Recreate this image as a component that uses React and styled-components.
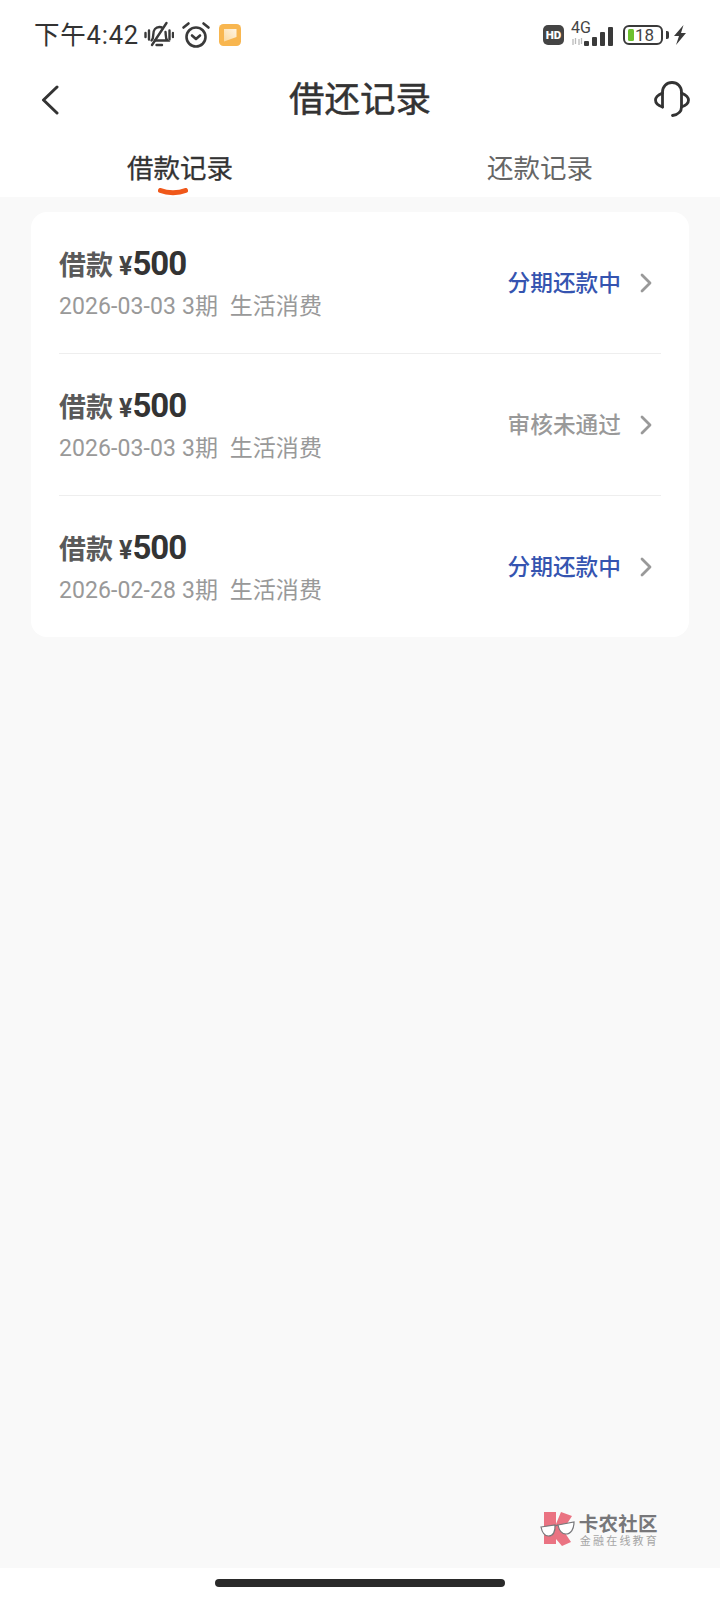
import styled, { createGlobalStyle } from 'styled-components';

const GlobalStyle = createGlobalStyle`
  html, body {
    margin: 0;
    padding: 0;
    background: #ffffff;
  }
  * {
    box-sizing: border-box;
  }
`;

const Page = styled.div`
  width: 720px;
  height: 1600px;
  display: flex;
  flex-direction: column;
  background: #ffffff;
  font-family: Roboto, "Noto Sans CJK SC", sans-serif;
  overflow: hidden;
`;

const StatusBar = styled.div`
  height: 70px;
  padding: 0 33px 0 34px;
  display: flex;
  align-items: center;
  justify-content: space-between;
`;

const StatusLeft = styled.div`
  display: flex;
  align-items: center;
`;

const StatusRight = styled.div`
  display: flex;
  align-items: center;
`;

const Time = styled.span`
  width: 103px;
  font-size: 25.5px;
  line-height: 30px;
  color: #333333;
  letter-spacing: 0.8px;
  margin-right: 7px;
  white-space: nowrap;
`;

const StatusIcon = styled.svg`
  display: block;
  margin-left: ${(p) => p.$gap || 0}px;
`;

const HdBadge = styled.span`
  width: 21px;
  height: 20px;
  border-radius: 5px;
  background: #444444;
  color: #ffffff;
  font-size: 11.5px;
  line-height: 20px;
  font-weight: 900;
  text-align: center;
`;

const Signal = styled.div`
  position: relative;
  width: 44px;
  height: 24px;
  margin-left: 7px;
`;

const NetLabel = styled.span`
  position: absolute;
  left: 0;
  top: -4px;
  font-size: 16px;
  line-height: 17px;
  color: #444444;
`;

const Battery = styled.div`
  width: 40px;
  height: 20px;
  margin-left: 8px;
  border: 2px solid #3a3a3a;
  border-radius: 6px;
  display: flex;
  align-items: center;
  padding-left: 3px;
`;

const BatteryFill = styled.div`
  width: 6px;
  height: 12px;
  border-radius: 1.5px;
  background: #6cc02e;
`;

const BatteryText = styled.span`
  font-size: 17px;
  line-height: 16px;
  color: #444444;
  margin-left: 1px;
`;

const BatteryCap = styled.div`
  width: 3px;
  height: 8px;
  margin-left: 3px;
  border-radius: 0 2px 2px 0;
  background: #3a3a3a;
`;

const Header = styled.div`
  height: 60px;
  padding: 0 30px;
  display: grid;
  grid-template-columns: 1fr auto 1fr;
  align-items: center;
`;

const HeaderStart = styled.div`
  display: flex;
  padding-left: 11px;
`;

const HeaderEnd = styled.div`
  display: flex;
  justify-content: flex-end;
  padding-bottom: 2px;
`;

const Title = styled.h1`
  margin: 0;
  font-size: 35.5px;
  line-height: 50px;
  font-weight: 400;
  color: #333333;
  -webkit-text-stroke: 0.5px #333333;
`;

const Tabs = styled.div`
  height: 67px;
  display: grid;
  grid-template-columns: 1fr 1fr;
`;

const Tab = styled.div`
  position: relative;
  text-align: center;
  font-size: 26.5px;
  line-height: 36px;
  padding-top: 21px;
  font-weight: 400;
  color: ${(p) => (p.$active ? '#333333' : '#666666')};
  -webkit-text-stroke: ${(p) => (p.$active ? '0.3px #333333' : '0')};
`;

const TabMark = styled.svg`
  position: absolute;
  left: 158px;
  top: 58px;
`;

const Main = styled.div`
  flex: 1;
  background: #f9f9f9;
  padding: 15px 31px 20px;
  display: flex;
  flex-direction: column;
`;

const Card = styled.div`
  background: #ffffff;
  border-radius: 16px;
  padding: 0 28px;
`;

const Row = styled.div`
  height: ${(p) => (p.$last ? '141px' : '142px')};
  display: flex;
  align-items: center;
  justify-content: space-between;
  border-bottom: ${(p) => (p.$last ? 'none' : '1px solid #eeeeee')};
  padding-bottom: 1px;
`;

const RowText = styled.div`
  display: flex;
  flex-direction: column;
  padding-top: 3px;
`;

const Amount = styled.div`
  display: flex;
  align-items: baseline;
  height: 42px;
  line-height: 42px;
  color: #333333;
  font-weight: 700;
`;

const AmountLabel = styled.span`
  font-size: 27px;
  color: #5a5a5a;
  margin-right: 6px;
`;

const Yen = styled.span`
  font-size: 25px;
  color: #444444;
`;

const AmountValue = styled.span`
  font-size: 33px;
  letter-spacing: -1px;
`;

const Meta = styled.div`
  margin-top: 5px;
  font-size: 23px;
  line-height: 34px;
  letter-spacing: 0.1px;
  color: #999999;
  white-space: pre;
`;

const RowEnd = styled.div`
  display: flex;
  align-items: center;
  gap: 19px;
  padding: 2px 9px 0 0;
`;

const Status = styled.span`
  font-size: 22.7px;
  line-height: 32px;
  font-weight: 500;
  padding-top: 2px;
  color: ${(p) => (p.$muted ? '#999999' : '#3554b0')};
`;

const Watermark = styled.div`
  margin-top: auto;
  align-self: flex-end;
  margin-right: 30px;
  display: flex;
  align-items: center;
  gap: 3px;
`;

const MarkText = styled.div`
  display: flex;
  flex-direction: column;
  align-items: flex-start;
`;

const MarkName = styled.span`
  font-size: 19.5px;
  line-height: 22px;
  font-weight: 700;
  color: #77777a;
  letter-spacing: 0.2px;
  padding-top: 2px;
`;

const MarkSlogan = styled.span`
  font-size: 11px;
  line-height: 13px;
  color: #a5a5a5;
  letter-spacing: 2.2px;
  margin: -1px 0 0 1px;
`;

const HomeArea = styled.div`
  height: 32px;
  display: flex;
  justify-content: center;
  padding-top: 11px;
`;

const HomeBar = styled.div`
  width: 290px;
  height: 8px;
  border-radius: 4px;
  background: #2a2a2a;
`;

const SignalSvg = styled.svg`
  position: absolute;
  left: 0;
  top: 0;
`;

const BellOff = () => (
  <StatusIcon width="30" height="30" viewBox="0 0 30 30" fill="none" stroke="#3a3a3a" strokeWidth="2.4" strokeLinecap="round">
    <path d="M7.500 20.500c1.500-1.500 1.800-3 1.800-6 0-4.500 2.500-7.500 6-7.500 1.300 0 2.500.4 3.500 1.100" />
    <path d="M21.500 12c.2.800.2 1.600.2 2.500 0 3 .3 4.500 1.800 6H11" />
    <path d="M12.500 25h5.500" />
    <path d="M22.500 3 8 25" />
    <path d="M1.500 13v4M5 10.500v9M25.500 10.500v9M29 13v4" />
  </StatusIcon>
);

const Alarm = () => (
  <StatusIcon $gap={6.5} width="30" height="30" viewBox="0 0 30 30" fill="none" stroke="#3a3a3a" strokeWidth="2.6" strokeLinecap="round" strokeLinejoin="round">
    <circle cx="15" cy="17" r="9.500" />
    <path d="M11 15.500l4 3.500 4-3.500" />
    <path d="M2.500 7.500 7.500 3.500M27.500 7.500 22.500 3.500" />
  </StatusIcon>
);

const NoteApp = () => (
  <StatusIcon $gap={7.5} width="24" height="24" viewBox="0 0 24 24">
    <defs>
      <linearGradient id="noteFill" x1="0" y1="1" x2="1" y2="0">
        <stop offset="0" stopColor="#fbd9a0" />
        <stop offset="1" stopColor="#fff4e2" />
      </linearGradient>
    </defs>
    <rect x="1" y="1" width="22" height="22" rx="4.500" fill="#f8b64f" />
    <path d="M6 6h12.500v8L6 18.500z" fill="url(#noteFill)" />
  </StatusIcon>
);

const SignalBars = () => (
  <SignalSvg width="44" height="24" viewBox="0 0 44 24">
    <path d="M2 16v6M4.500 15v6M8 16v6M10.500 15v6" stroke="#bbbbbb" strokeWidth="1.300" />
    <rect x="13" y="18" width="5" height="5" rx="1" fill="#3a3a3a" />
    <rect x="21" y="14" width="5" height="9" rx="1" fill="#3a3a3a" />
    <rect x="29" y="9" width="5" height="14" rx="1" fill="#3a3a3a" />
    <rect x="37" y="4" width="5" height="19" rx="1" fill="#3a3a3a" />
  </SignalSvg>
);

const Bolt = () => (
  <StatusIcon $gap={4} width="14" height="20" viewBox="0 0 14 20">
    <path d="M10.500 0 1 11h5l-3 9 10-12H8z" fill="#3a3a3a" />
  </StatusIcon>
);

const BackIcon = () => (
  <svg width="18" height="30" viewBox="0 0 18 30" fill="none" stroke="#333333" strokeWidth="3" strokeLinecap="round" strokeLinejoin="round">
    <path d="M16 2 2.500 15 16 28" />
  </svg>
);

const HeadsetIcon = () => (
  <svg width="36" height="36" viewBox="0 0 36 36" fill="none" stroke="#333333" strokeWidth="2.800" strokeLinecap="round" strokeLinejoin="round">
    <path d="M8.500 26V11C8.500 5.500 12.500 1.500 18 1.500S27.500 5.500 27.500 11v15c0 4.500-3.500 7.500-9 8.500" />
    <path d="M8.500 12C4 14 1.500 16.500 1.500 19S4 24.500 8.500 26" />
    <path d="M27.500 12C32 14 34.500 16.500 34.500 19S32 24.500 27.500 26" />
  </svg>
);

const Chevron = () => (
  <svg width="12" height="20" viewBox="0 0 12 20" fill="none" stroke="#999999" strokeWidth="2.800" strokeLinecap="round" strokeLinejoin="round">
    <path d="M2 2l8 8-8 8" />
  </svg>
);

const LogoMark = () => (
  <svg width="36" height="36" viewBox="0 0 36 36">
    <path d="M4 0h12v12L21 0l11 4-9 14 8 12-9 4-6-7v5H4z" fill="#ea7382" />
    <path d="M1 15 15 13C15.500 20 13 24 8.500 24 4.500 24 2 20 1 15Z" fill="#ffffff" stroke="#77777a" strokeWidth="1.200" />
    <path d="M18 13 34 10C34 17 31 22 26 22 21.500 22 19 18 18 13Z" fill="#ffffff" stroke="#77777a" strokeWidth="1.200" />
    <path d="M15 14 18 13" stroke="#77777a" strokeWidth="1.200" />
  </svg>
);

const records = [
  { date: '2026-03-03', status: '分期还款中' },
  { date: '2026-03-03', status: '审核未通过', muted: true },
  { date: '2026-02-28', status: '分期还款中' },
];

export default function App() {
  return (
    <Page>
      <GlobalStyle />
      <StatusBar>
        <StatusLeft>
          <Time>下午4:42</Time>
          <BellOff />
          <Alarm />
          <NoteApp />
        </StatusLeft>
        <StatusRight>
          <HdBadge>HD</HdBadge>
          <Signal>
            <SignalBars />
            <NetLabel>4G</NetLabel>
          </Signal>
          <Battery>
            <BatteryFill />
            <BatteryText>18</BatteryText>
          </Battery>
          <BatteryCap />
          <Bolt />
        </StatusRight>
      </StatusBar>
      <Header>
        <HeaderStart>
          <BackIcon />
        </HeaderStart>
        <Title>借还记录</Title>
        <HeaderEnd>
          <HeadsetIcon />
        </HeaderEnd>
      </Header>
      <Tabs>
        <Tab $active>
          借款记录
          <TabMark width="30" height="9" viewBox="0 0 30 9">
            <path d="M2.500 2.500c7 3 18 3 25 0" fill="none" stroke="#f0581a" strokeWidth="5" strokeLinecap="round" />
          </TabMark>
        </Tab>
        <Tab>还款记录</Tab>
      </Tabs>
      <Main>
        <Card>
          {records.map((r, i) => (
            <Row key={i} $last={i === records.length - 1}>
              <RowText>
                <Amount>
                  <AmountLabel>借款</AmountLabel>
                  <Yen>¥</Yen>
                  <AmountValue>500</AmountValue>
                </Amount>
                <Meta>{r.date} 3期  生活消费</Meta>
              </RowText>
              <RowEnd>
                <Status $muted={r.muted}>{r.status}</Status>
                <Chevron />
              </RowEnd>
            </Row>
          ))}
        </Card>
        <Watermark>
          <LogoMark />
          <MarkText>
            <MarkName>卡农社区</MarkName>
            <MarkSlogan>金融在线教育</MarkSlogan>
          </MarkText>
        </Watermark>
      </Main>
      <HomeArea>
        <HomeBar />
      </HomeArea>
    </Page>
  );
}
